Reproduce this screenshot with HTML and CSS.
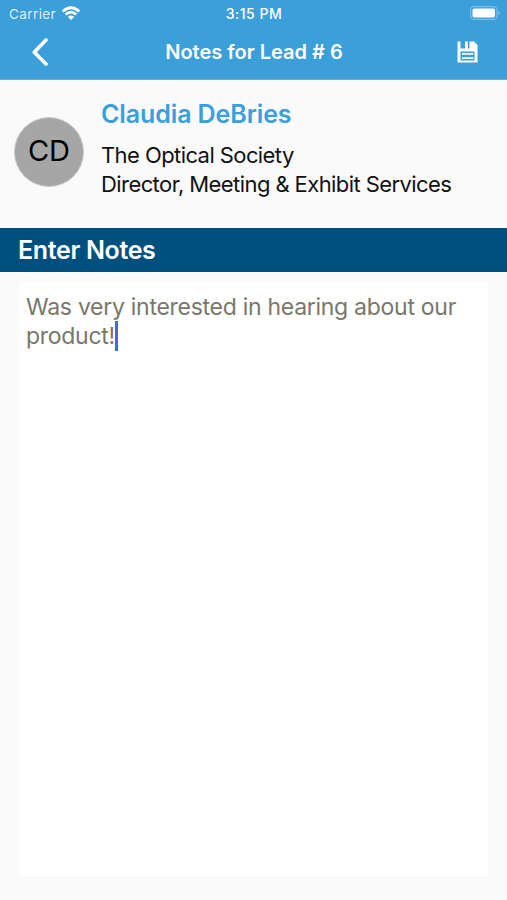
FILE: index.html
```html
<!DOCTYPE html>
<html lang="en">
<head>
<meta charset="utf-8">
<title>Notes for Lead # 6</title>
<link rel="stylesheet" href="styles.css">
</head>
<body>
<header class="header">
  <div class="status">
    <div class="status-left"><span class="carrier">Carrier</span>
      <svg class="wifi" width="20" height="15" viewBox="0 0 20 15" fill="none" stroke="#fff" stroke-width="2.7"><path d="M1.7 5.5Q10-2 18.3 5.5M4.7 8.6Q10 3.8 15.3 8.6"/><path d="M6.8 10.8Q10 8 13.2 10.8L10 14Z" fill="#fff" stroke="none"/></svg>
    </div>
    <span class="time">3:15 PM</span>
    <svg class="battery" width="31" height="15" viewBox="0 0 31 15"><rect x=".6" y=".6" width="26.3" height="12.8" rx="3.5" fill="none" stroke="#7abde6" stroke-width="1.2"/><rect x="2.5" y="2.5" width="22.5" height="9" rx="1.8" fill="#fff"/><path d="M28.2 4.7Q30 5.2 30 7T28.2 9.3Z" fill="#7abde6"/></svg>
  </div>
  <div class="nav">
    <svg class="back" width="18" height="30" viewBox="0 0 18 30" fill="none" stroke="#fff" stroke-width="3.6" stroke-linecap="round" stroke-linejoin="round"><path d="M16 3 4.3 15.2 16 27"/></svg>
    <h1 class="title">Notes for Lead # 6</h1>
    <svg class="save" width="21" height="22" viewBox="0 0 21 22"><path fill="#fff" fill-rule="evenodd" d="M.5 .5H3.5V7.5H16V.5H17L20.5 4V21.5H.5ZM3.5 10.5V19.5H17.5V10.5Z"/><path fill="#fff" d="M8 .5H10.8V8H8ZM12.5 .5H16V8H12.5Z"/><path d="M5 12.9H16.3M5 17.1H16.3" stroke="#fff" stroke-width="1.6"/></svg>
  </div>
</header>
<section class="lead">
  <div class="avatar"><span>CD</span></div>
  <div class="details">
    <h2 class="name">Claudia DeBries</h2>
    <p class="line">The Optical Society</p>
    <p class="line">Director, Meeting &amp; Exhibit Services</p>
  </div>
</section>
<h3 class="section-title">Enter Notes</h3>
<main class="notes"><p class="note">Was very interested in hearing about our<br>product!<i class="caret"></i></p></main>
</body>
</html>
```
FILE: styles.css
```css
* { box-sizing: border-box; margin: 0; padding: 0; }
body {
  height: 900px;
  display: flex;
  flex-direction: column;
  background: #fafafa;
  font-family: Inter, "Liberation Sans", sans-serif;
  color: #111;
  overflow: hidden;
}
svg { display: block; flex: none; }
.header { height: 80px; background: #3b9fda; border-bottom: 1px solid #66afd9; color: #fff; flex: none; }
.status {
  height: 27px;
  padding: 0 6px 0 8px;
  display: grid;
  grid-template-columns: 1fr auto 1fr;
  align-items: center;
  font-size: 13px;
}
.status-left { display: flex; align-items: center; gap: 5px; padding-left: 1px; }
.carrier { color: #dceefa; font-size: 13.5px; letter-spacing: .4px; }
.time { font-size: 14px; font-weight: 500; letter-spacing: .5px; margin-right: 1px; }
.battery { justify-self: end; }
.nav {
  height: 50px;
  padding: 0 29px 0 30px;
  display: grid;
  grid-template-columns: 1fr auto 1fr;
  align-items: center;
}
.title { font-size: 20px; font-weight: 600; line-height: 24px; }
.save { justify-self: end; }
.lead { height: 148px; flex: none; display: flex; padding: 19px 15px 0 14px; gap: 17px; }
.avatar {
  width: 70px;
  height: 70px;
  margin-top: 18px;
  padding-bottom: 3px;
  border-radius: 50%;
  border: 1px solid #c9c9c9;
  background: #a6a6a6;
  display: flex;
  align-items: center;
  justify-content: center;
  font-size: 29px;
  color: #000;
}
.name { font-size: 25px; font-weight: 600; line-height: 30px; letter-spacing: -.1px; color: #3b9fda; margin-bottom: 12px; }
.line { font-size: 22px; line-height: 29px; letter-spacing: -.58px; white-space: nowrap; }
.section-title {
  height: 44px;
  flex: none;
  padding-left: 18px;
  background: #00507f;
  color: #fff;
  font-size: 25px;
  font-weight: 600;
  line-height: 44px;
  letter-spacing: -.35px;
}
.notes { flex: 1; margin: 10px 19px 24px 20px; padding: 11px 6px; background: #fff; }
.note { font-size: 23px; line-height: 29px; letter-spacing: -.28px; color: #77776a; white-space: nowrap; }
.caret { display: inline-block; width: 3px; height: 30px; margin: -8px 0 -4px; background: #4169e0; vertical-align: -3px; }
```
